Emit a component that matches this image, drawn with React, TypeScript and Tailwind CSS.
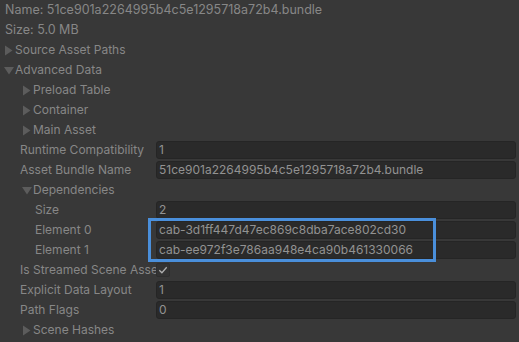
import React from "react";

type Row = {
  label: string;
  indent: number;
  arrow?: "right" | "down";
  value?: string;
  check?: boolean;
};

const rows: Row[] = [
  { label: "Source Asset Paths", indent: 0, arrow: "right" },
  { label: "Advanced Data", indent: 0, arrow: "down" },
  { label: "Preload Table", indent: 1, arrow: "right" },
  { label: "Container", indent: 1, arrow: "right" },
  { label: "Main Asset", indent: 1, arrow: "right" },
  { label: "Runtime Compatibility", indent: 1, value: "1" },
  { label: "Asset Bundle Name", indent: 1, value: "51ce901a2264995b4c5e1295718a72b4.bundle" },
  { label: "Dependencies", indent: 1, arrow: "down" },
  { label: "Size", indent: 2, value: "2" },
];

const rowsAfter: Row[] = [
  { label: "Is Streamed Scene Asset", indent: 1, check: true },
  { label: "Explicit Data Layout", indent: 1, value: "1" },
  { label: "Path Flags", indent: 1, value: "0" },
  { label: "Scene Hashes", indent: 1, arrow: "right" },
];

const Arrow = ({ dir }: { dir: "right" | "down" }) =>
  dir === "right" ? (
    <svg width="11" height="11" viewBox="0 0 11 11" className="shrink-0">
      <path d="M1 0.5 L8.5 5.5 L1 10.5 Z" fill="#5c5c5c" />
    </svg>
  ) : (
    <svg width="11" height="11" viewBox="0 0 11 11" className="shrink-0">
      <path d="M0 2 L10 2 L5 9.5 Z" fill="#5c5c5c" />
    </svg>
  );

const Field = ({ value }: { value: string }) => (
  <div className="h-[18px] flex-1 rounded-[3px] border border-[#252525] bg-[#2a2a2a] pl-[2px] flex items-center text-[#929292] whitespace-nowrap">
    {value}
  </div>
);

const PropRow = ({ row }: { row: Row }) => {
  const padLeft = row.arrow
    ? ["pl-[4px]", "pl-[22px]", "pl-[37px]"][row.indent]
    : ["pl-[15px]", "pl-[20px]", "pl-[35px]"][row.indent];
  return (
    <div className={`h-5 flex items-center pr-[3px] ${padLeft}`}>
      {row.arrow ? (
        <div className="flex items-center text-[#878787]">
          <Arrow dir={row.arrow} />
          <span>{row.label}</span>
        </div>
      ) : (
        <>
          <div
            className={`${
              row.indent === 2 ? "w-[121px]" : "w-[136px]"
            } shrink-0 whitespace-nowrap text-[#878787] ${row.check ? "overflow-hidden" : ""}`}
          >
            {row.label}
          </div>
          {row.check ? (
            <div className="w-[14px] h-[14px] rounded-[2px] border border-[#2e2e2e] bg-[#333333] flex items-center justify-center">
              <svg width="10" height="10" viewBox="0 0 10 10">
                <path d="M1.3 5.3 L3.9 7.7 L8.7 2.3" stroke="#b0b0b0" strokeWidth="1.3" fill="none" />
              </svg>
            </div>
          ) : (
            <Field value={row.value ?? ""} />
          )}
        </>
      )}
    </div>
  );
};

export default function App() {
  return (
    <div
      className="w-[519px] h-[342px] overflow-hidden bg-[#383838] text-[12px] leading-[16px]"
      style={{ fontFamily: "Inter, 'Noto Sans', sans-serif" }}
    >
      <div className="h-5 flex items-center pl-[5px] text-[#878787] text-[12.5px] whitespace-nowrap">
        Name: 51ce901a2264995b4c5e1295718a72b4.bundle
      </div>
      <div className="h-5 flex items-center pl-[5px] text-[#878787] text-[12.5px]">Size: 5.0 MB</div>
      {rows.map((r) => (
        <PropRow key={r.label} row={r} />
      ))}

      <div className="relative">
        <div className="h-5 flex items-center pl-[35px] pr-[3px]">
          <div className="w-[121px] shrink-0 text-[#878787]">Element 0</div>
          <Field value="cab-3d1ff447d47ec869c8dba7ace802cd30" />
        </div>
        <div className="h-5 flex items-center pl-[35px] pr-[3px]">
          <div className="w-[121px] shrink-0 text-[#878787]">Element 1</div>
          <Field value="cab-ee972f3e786aa948e4ca90b461330066" />
        </div>
        <div className="absolute left-[148px] top-[-2px] w-[288px] h-[44px] border-[3px] border-[#4a8fdb]" />
      </div>

      {rowsAfter.map((r) => (
        <PropRow key={r.label} row={r} />
      ))}
    </div>
  );
}
